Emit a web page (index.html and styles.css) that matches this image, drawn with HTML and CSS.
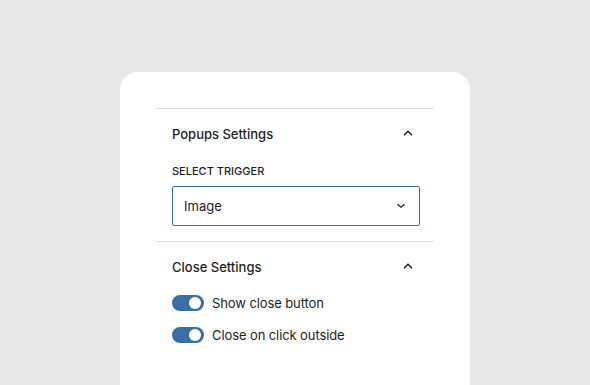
FILE: index.html
```html
<!doctype html>
<html>
<head>
    <meta charset="utf-8">
    <title>Popups Settings</title>
    <link rel="stylesheet" href="styles.css">
</head>
<body>
	<div class='panel'>
		<div class='section'>
			<div class='head'>
				<span>Popups Settings</span>
				<svg width="12" height="8" viewBox="0 0 12 8"><path d="M2 6.3 L6 2.3 L10 6.3" fill="none" stroke="#1e1e1e" stroke-width="1.5"/></svg>
			</div>
			<div class='body'>
				<label class='caption'>Select Trigger</label>
				<div class='select'>
					<span>Image</span>
					<svg width="10" height="6" viewBox="0 0 10 6"><path d="M1.5 1.2 L5 4.3 L8.5 1.2" fill="none" stroke="#1e1e1e" stroke-width="1.2"/></svg>
				</div>
			</div>
		</div>
		<div class='section'>
			<div class='head'>
				<span>Close Settings</span>
				<svg width="12" height="8" viewBox="0 0 12 8"><path d="M2 6.3 L6 2.3 L10 6.3" fill="none" stroke="#1e1e1e" stroke-width="1.5"/></svg>
			</div>
			<div class='body toggles'>
				<div class='toggle'><span class='switch'></span>Show close button</div>
				<div class='toggle'><span class='switch'></span>Close on click outside</div>
			</div>
		</div>
	</div>
</body>
</html>
```

FILE: styles.css
```css
*{margin: 0;padding: 0;box-sizing: border-box;}
body{background: #e8e8e8;font-family: Inter, "Liberation Sans", sans-serif;color: #1e1e1e;height: 385px;overflow: hidden;}
.panel{
	width: 350px;height: 330px;margin: 72px 0 0 120px;background: #fff;
	border-radius: 18px;padding: 36px 36px 0;
}
.section{border-top: 1px solid #e0e0e0;}
.head{
	display: flex;justify-content: space-between;align-items: center;
	height: 49px;padding: 0 20px 0 16px;font-size: 13px;font-weight: 500;
}
.head svg{margin-top: -1px;}
.body{padding: 0 14px 15px 16px;}
.caption{display: block;font-size: 11px;font-weight: 500;text-transform: uppercase;line-height: 14px;margin: 6px 0 8px;}
.select{
	display: flex;justify-content: space-between;align-items: center;
	height: 40px;border: 1px solid #3a6ea5;border-radius: 2px;
	padding: 0 13px 0 11px;font-size: 13px;
}
.toggles{display: flex;flex-direction: column;gap: 16px;padding-top: 4px;}
.toggle{display: flex;align-items: center;gap: 8px;font-size: 13px;height: 16px;letter-spacing: -0.1px;}
.switch{
	width: 32px;height: 16px;border-radius: 8px;background: #3a6ea5;position: relative;
}
.switch:after{
	content: '';position: absolute;right: 3px;top: 2px;width: 12px;height: 12px;
	border-radius: 50%;background: #fff;
}
```
